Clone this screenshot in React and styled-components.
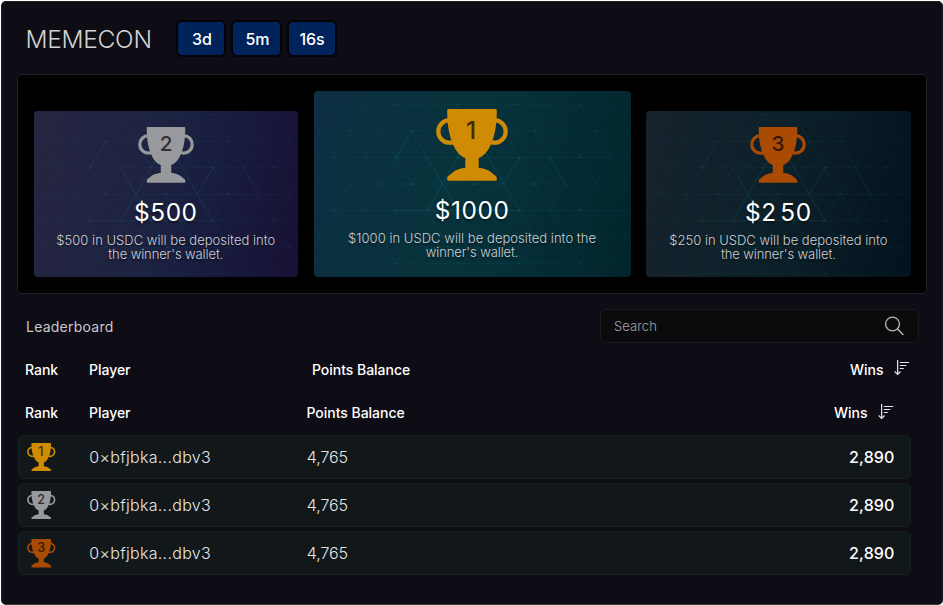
import React from "react";
import styled, { createGlobalStyle } from "styled-components";

const GlobalStyle = createGlobalStyle`
  * { box-sizing: border-box; }
  body {
    margin: 0;
    background: #fff;
    font-family: "Inter", "Liberation Sans", sans-serif;
    color: #fff;
  }
`;

const Panel = styled.main`
  width: 942px;
  height: 604px;
  margin: 1px 0 0 1px;
  padding: 18px 15px 0 16px;
  border: 1px solid #18231f;
  border-right-color: #1b1a22;
  border-bottom-color: #3b3a42;
  border-radius: 5px;
  background: #0e0c15;
  overflow: hidden;
`;

const TopBar = styled.header`
  display: flex;
  align-items: center;
  height: 37px;
  padding-left: 7.5px;
`;

const Title = styled.h1`
  width: 150.5px;
  margin: 0;
  font-size: 24.5px;
  font-weight: 300;
  letter-spacing: -0.3px;
  color: #d2d2d2;
`;

const Countdown = styled.div`
  display: flex;
  gap: 5px;
`;

const TimeBox = styled.div`
  display: flex;
  align-items: center;
  justify-content: center;
  width: 50.4px;
  height: 37px;
  padding-left: ${(p) => p.$nudge || 0}px;
  border: 2px solid #030307;
  border-radius: 6px;
  background: #00235b;
  font-size: 16px;
  font-weight: 500;
  letter-spacing: -0.1px;
`;

const Podium = styled.section`
  display: flex;
  align-items: flex-end;
  gap: 15.6px;
  width: 910px;
  height: 220px;
  margin-top: 17px;
  margin-left: -1px;
  padding: 0 15.2px 16px 15.6px;
  border: 1px solid #232323;
  border-radius: 5px;
  background: #000;
`;

const backgrounds = {
  gold: "linear-gradient(100deg, #0d2f42 0%, #08323c 40%, #06303a 60%, #02252c 100%)",
  silver: "linear-gradient(100deg, #262541 0%, #1d2341 42%, #191e3f 62%, #171134 100%)",
  bronze: "linear-gradient(100deg, #17222d 0%, #0d212a 45%, #0a1c26 65%, #03121e 100%)",
};

const PrizeCard = styled.article`
  display: grid;
  grid-template: 1fr / 1fr;
  width: ${(p) => (p.$tall ? 317 : 264.4)}px;
  height: ${(p) => (p.$tall ? 186 : 166.5)}px;
  border-radius: 4px;
  background: ${(p) => backgrounds[p.$tone]};
  overflow: hidden;
  > * { grid-area: 1 / 1; }
`;

const GridArt = styled.svg`
  display: block;
  width: 100%;
  height: 100%;
`;

const PrizeBody = styled.div`
  display: flex;
  flex-direction: column;
  align-items: center;
  padding-top: ${(p) => (p.$tall ? 18.4 : 16.4)}px;
  text-shadow: 0 2px 2px rgba(0, 0, 0, 0.45);
`;

const Amount = styled.strong`
  margin-top: ${(p) => (p.$tall ? 15 : 15.5)}px;
  height: 28px;
  font-size: 24.4px;
  line-height: 28px;
  font-weight: 400;
  letter-spacing: 0.6px;
  word-spacing: -4px;
`;

const Blurb = styled.p`
  margin: 6.6px 0 0;
  font-size: 13px;
  line-height: 14px;
  font-weight: 300;
  color: #ccd0d6;
  text-align: center;
`;

const Line = styled.span`
  display: block;
  letter-spacing: ${(p) => p.$track || 0}px;
`;

const BoardBar = styled.div`
  display: flex;
  align-items: center;
  justify-content: space-between;
  height: 34px;
  margin-top: 15px;
  padding: 0 8px 0 8px;
`;

const BoardTitle = styled.h2`
  margin: 0;
  font-size: 14px;
  font-weight: 400;
  letter-spacing: 0.24px;
  color: #c9c9cb;
`;

const SearchBox = styled.label`
  display: flex;
  align-items: center;
  justify-content: space-between;
  width: 319px;
  height: 34px;
  padding: 0 14px 0 13px;
  border: 1px solid #131e1f;
  border-radius: 5px;
  background: #0b0b0d;
  font-size: 13px;
  font-weight: 300;
  letter-spacing: 0.1px;
  color: #a5a5a7;
`;

const HeadRow = styled.div`
  display: grid;
  grid-template-columns: 64px ${(p) => (p.$inset ? 217.5 : 223)}px 1fr auto;
  align-items: center;
  height: 43.5px;
  padding: 0 ${(p) => (p.$inset ? 33.5 : 17.5)}px 0 7px;
  font-size: 14px;
  font-weight: 500;
  letter-spacing: -0.03px;
`;

const Heads = styled.div`
  margin-top: 4.4px;
  padding-bottom: 0.4px;
`;

const SortHead = styled.span`
  display: flex;
  align-items: center;
  gap: 10px;
  > svg { margin-top: -3px; }
`;

const Rows = styled.div`
  display: grid;
  gap: 4.3px;
`;

const Row = styled.div`
  display: grid;
  grid-template-columns: 62.3px 217.5px 1fr auto;
  align-items: center;
  width: 893px;
  height: 44px;
  padding: 0 15.5px 0 8px;
  border: 1px solid #14221f;
  border-radius: 5px;
  background: #12171a;
  font-size: 16px;
  color: #e4e6e6;
`;

const Player = styled.span`
  letter-spacing: 0.3px;
  font-weight: 350;
`;

const Points = styled.span`
  letter-spacing: -0.1px;
  font-weight: 350;
`;

const Wins = styled.span`
  font-weight: 500;
  color: #fff;
  letter-spacing: 0.12px;
`;

const TrophySvg = styled.svg`
  display: block;
  width: ${(p) => p.$size}px;
  height: ${(p) => p.$size}px;
`;

const TrophyDigit = styled.text`
  font-family: "Inter", sans-serif;
  font-weight: 500;
  text-anchor: middle;
  text-shadow: none;
`;

const metals = {
  gold: { fill: "#cf8b04", ink: "#3f2b06", n: 1, w: 24.5, y: 30.3 },
  silver: { fill: "#98999c", ink: "#2f3033", n: 2, w: 26.5, y: 31 },
  bronze: { fill: "#aa4b03", ink: "#371803", n: 3, w: 26.5, y: 31 },
};

function Trophy({ tone, size, small }) {
  const m = metals[tone];
  return (
    <TrophySvg $size={size} viewBox="0 0 72 72">
      <g fill="none" stroke={m.fill} strokeWidth="4.2">
        <circle cx="13.6" cy="22.4" r="11.3" />
        <circle cx="58.4" cy="22.4" r="11.3" />
      </g>
      <path
        fill={m.fill}
        d="M12.4 0H59.6Q60.8 0 60.8 1.2C60.8 9 60.4 15 59.2 21.5C57.5 30.5 52.5 46 42.7 49V58.7C47 59.2 51 60.3 53.5 62L60 67.2Q60.8 68 60.8 69V70.6Q60.8 71.8 59.6 71.8H12.4Q11.2 71.8 11.2 70.6V69Q11.2 68 12 67.2L18.5 62C21 60.3 25 59.2 29.3 58.7V49C19.5 46 14.5 30.5 12.8 21.5C11.6 15 11.2 9 11.2 1.2Q11.2 0 12.4 0Z"
      />
      <TrophyDigit x={tone === "gold" ? 35 : 36} y={small ? 32 : m.y} fontSize={small ? 32 : m.w} fill={m.ink}>
        {m.n}
      </TrophyDigit>
    </TrophySvg>
  );
}

const STEP = 30.67;
const RISE = 26.5;

/* Triangular lattice centred on the card, strongest near the middle. */
function Lattice({ width, height, tone, color }) {
  const cx = width / 2 + 0.6;
  const cy = height / 2;
  const dim = [];
  const lit = [];
  const dots = [];
  for (let r = -3; r <= 3; r++) {
    for (let c = -6; c <= 6; c++) {
      const odd = Math.abs(r) % 2;
      const x = cx + (c + odd / 2) * STEP;
      const y = cy + r * RISE;
      const seed = Math.abs(r * 7 + c * 5 + 40);
      if (seed % 5 !== 0) dim.push(`M${x} ${y}h${STEP}`);
      if (seed % 4 !== 0) dim.push(`M${x} ${y}l${STEP / 2} ${RISE}`);
      if (seed % 3 !== 0) dim.push(`M${x} ${y}l${-STEP / 2} ${RISE}`);
      if (seed % 2 === 0) dots.push([x, y]);
    }
  }
  const add = (a, ar, b, br) =>
    lit.push(`M${cx + a * STEP} ${cy + ar * RISE}L${cx + b * STEP} ${cy + br * RISE}`);
  add(-3, 0, -2, -2);
  add(-2, -2, -0.5, 1);
  add(-1, 0, 0, -2);
  add(1, 0, 0, -2);
  add(3, 0, 2, -2);
  add(1, 0, 1.5, -1);
  add(1, 0, 2, 2);
  add(-1, 0, -1.5, 1);
  add(-4, 0, 4, 0);
  add(-2.5, 1, 1.5, 1);
  return (
    <GridArt viewBox={`0 0 ${width} ${height}`} aria-hidden="true">
      <defs>
        <radialGradient id={`fade-${tone}`} r="0.6">
          <stop offset="0" stopColor="#fff" />
          <stop offset="0.6" stopColor="#fff" stopOpacity="0.8" />
          <stop offset="1" stopColor="#fff" stopOpacity="0.35" />
        </radialGradient>
        <mask id={`mask-${tone}`} maskUnits="userSpaceOnUse" x="0" y="0" width={width} height={height}>
          <rect width={width} height={height} fill={`url(#fade-${tone})`} />
        </mask>
      </defs>
      <g mask={`url(#mask-${tone})`} stroke={color} fill="none" strokeWidth="0.9">
        <path d={dim.join("")} opacity="0.16" />
        <path d={lit.join("")} opacity="0.18" />
        {dots.map(([x, y]) => (
          <circle key={`${x}-${y}`} cx={x} cy={y} r="0.7" fill={color} stroke="none" opacity="0.5" />
        ))}
      </g>
    </GridArt>
  );
}

function SearchIcon() {
  return (
    <svg width="20" height="20" viewBox="0 0 20 20" fill="none" stroke="#b4b4b6" strokeWidth="1.4">
      <circle cx="8.5" cy="8" r="6.9" />
      <path d="M13.4 13l5.6 5.6" strokeLinecap="round" />
    </svg>
  );
}

function SortIcon() {
  return (
    <svg width="16" height="17" viewBox="0 0 16 17" fill="none" stroke="#e6e6e8" strokeWidth="1.2">
      <path d="M3.6 1V15.4M.7 12.5L3.6 15.4L6.5 12.5" />
      <path d="M5.8 3.5H15.2M5.8 6.5H12.4M5.8 9.5H9.8" />
    </svg>
  );
}

const prizes = [
  { tone: "silver", amount: "$500", lines: [["$500 in USDC will be deposited into", 0.02], ["the winner's wallet.", -0.1]], color: "#23708a", trophy: 56 },
  { tone: "gold", tall: true, amount: "$1000", lines: [["$1000 in USDC will be deposited into the", 0.04], ["winner's wallet.", -0.1]], color: "#0f8f88", trophy: 72 },
  { tone: "bronze", amount: "$2 50", lines: [["$250 in USDC will be deposited into", 0], ["the winner's wallet.", -0.1]], color: "#13766f", trophy: 56 },
];

const players = ["gold", "silver", "bronze"];

function TableHead({ inset }) {
  return (
    <HeadRow $inset={inset}>
      <span>Rank</span>
      <span>Player</span>
      <span>Points Balance</span>
      <SortHead>
        Wins <SortIcon />
      </SortHead>
    </HeadRow>
  );
}

export default function App() {
  return (
    <>
      <GlobalStyle />
      <Panel>
        <TopBar>
          <Title>MEMECON</Title>
          <Countdown>
            <TimeBox $nudge={1.5}>3d</TimeBox>
            <TimeBox $nudge={1.5}>5m</TimeBox>
            <TimeBox>16s</TimeBox>
          </Countdown>
        </TopBar>
        <Podium>
          {prizes.map((p) => (
            <PrizeCard key={p.tone} $tone={p.tone} $tall={p.tall}>
              <Lattice width={p.tall ? 317 : 264.4} height={p.tall ? 186 : 166.5} tone={p.tone} color={p.color} />
              <PrizeBody $tall={p.tall}>
                <Trophy tone={p.tone} size={p.trophy} />
                <Amount $tall={p.tall}>{p.amount}</Amount>
                <Blurb>
                  {p.lines.map(([text, track]) => (
                    <Line key={text} $track={track}>{text}</Line>
                  ))}
                </Blurb>
              </PrizeBody>
            </PrizeCard>
          ))}
        </Podium>
        <BoardBar>
          <BoardTitle>Leaderboard</BoardTitle>
          <SearchBox>
            <span>Search</span>
            <SearchIcon />
          </SearchBox>
        </BoardBar>
        <Heads>
          <TableHead />
          <TableHead inset />
        </Heads>
        <Rows>
          {players.map((tone) => (
            <Row key={tone}>
              <Trophy tone={tone} size={28.5} small />
              <Player>0×bfjbka...dbv3</Player>
              <Points>4,765</Points>
              <Wins>2,890</Wins>
            </Row>
          ))}
        </Rows>
      </Panel>
    </>
  );
}
